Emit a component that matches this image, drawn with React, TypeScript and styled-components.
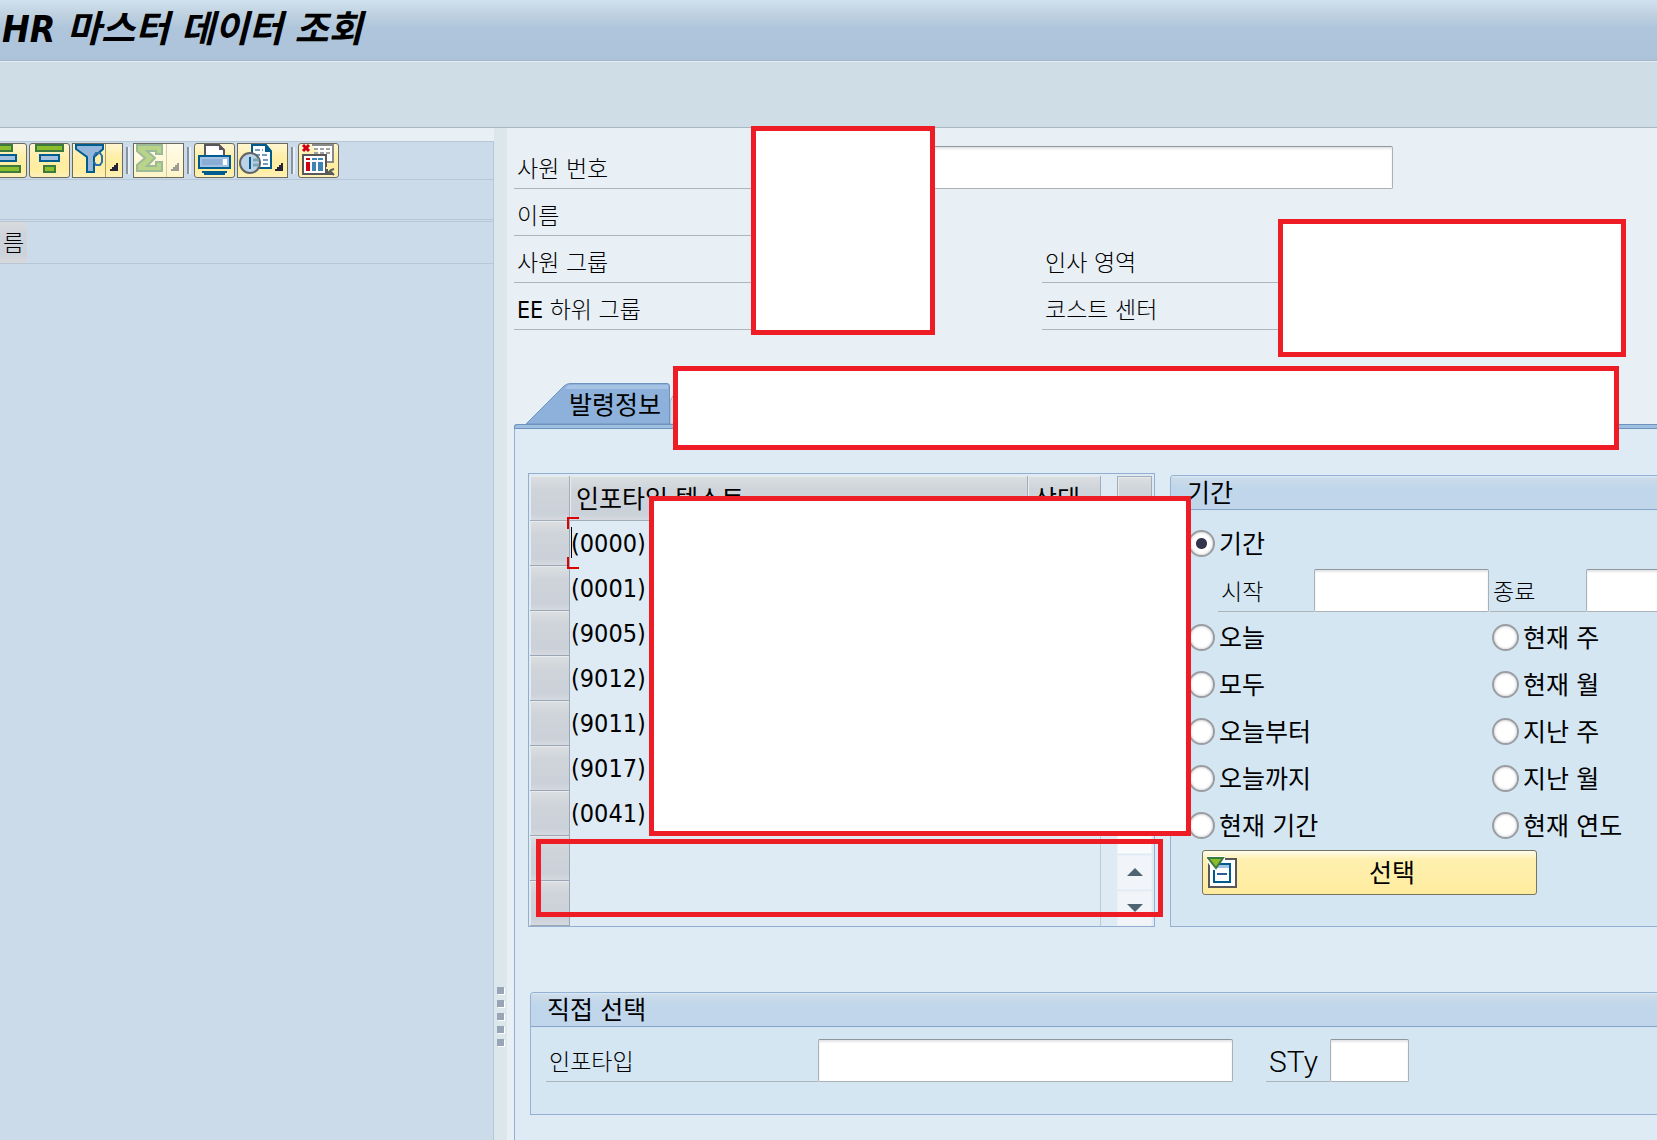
import React from "react";
import styled, { createGlobalStyle, css } from "styled-components";

const GlobalStyle = createGlobalStyle`
  *, *::before, *::after { box-sizing: border-box; }
  body {
    margin: 0;
    overflow: hidden;
    background: #e8eff5;
    color: #000;
    font-family: "DejaVu Sans Condensed", "Noto Sans CJK KR", sans-serif;
    font-size: 25px;
    line-height: 36px;
  }
  button, input { font: inherit; color: inherit; }
`;

/* ---------- frame ---------- */

const Page = styled.div`
  position: relative;
  display: flex;
  flex-direction: column;
  min-height: 100vh;
  overflow: hidden;
`;

const TitleBar = styled.header`
  display: flex;
  align-items: flex-start;
  height: 61px;
  padding: 8px 0 0 2px;
  border-bottom: 1px solid #a3b6c9;
  background: linear-gradient(#d0e0ee 0, #c0d2e0 14px, #aec5db 28px, #adc3da 100%);
`;

const Title = styled.h1`
  margin: 0;
  font-size: 37px;
  line-height: 44px;
  font-weight: 700;
  font-style: italic;
  white-space: nowrap;
`;

const CommandBar = styled.div`
  height: 67px;
  border-top: 1px solid #e6eef5;
  border-bottom: 1px solid #a8b7c4;
  background: #cfdde7;
`;

const Workspace = styled.div`
  display: flex;
  flex: 1;
`;

/* ---------- left tree ---------- */

const SidePanel = styled.aside`
  display: flex;
  flex: 0 0 494px;
  flex-direction: column;
  padding-top: 13px;
  overflow: hidden;
`;

const SideBody = styled.div`
  flex: 1;
  border-top: 1px solid #b8c7d6;
  border-right: 1px solid #b8c5d5;
  background: #cbdbe9;
`;

const Toolbar = styled.div`
  display: flex;
  align-items: center;
  gap: 2px;
  height: 38px;
  margin-left: -14px;
  border-bottom: 1px solid #b8c7d6;
`;

const ToolButton = styled.button<{ $split?: boolean }>`
  display: flex;
  width: ${(p) => (p.$split ? 51 : 41)}px;
  height: 35px;
  padding: 0;
  overflow: hidden;
  border: 1px solid #6b6a5c;
  border-radius: ${(p) => (p.$split ? 0 : 3)}px;
  background: linear-gradient(#fff6d2, #ffeea6 40%, #ffeda0 80%, #fff2bd);

  &:disabled { border-color: #6b6a5c; background: linear-gradient(#fffbe8, #fff4c8); }
`;

const Divider = styled.span`
  width: 4px;
  height: 27px;
  margin: 0 1px;
  border-left: 2px solid #8a93a0;
  border-right: 2px solid #e8eff6;
`;

const FilterStrip = styled.div`
  height: 42px;
  border-bottom: 3px double #b8c7d6;
`;

const TreeHeader = styled.div`
  height: 42px;
  border-bottom: 1px solid #b8c7d6;
`;

const TreeColumn = styled.div`
  width: 27px;
  height: 41px;
  padding-left: 3px;
  background: linear-gradient(#d9dbdd, #cfd4dc 30%, #cdd3db 80%, #d8dadc);
  font-size: 23px;
  font-weight: 300;
  line-height: 42px;
`;

const Splitter = styled.div`
  display: flex;
  flex: 0 0 13px;
  flex-direction: column;
  align-items: center;
  justify-content: flex-end;
  gap: 6px;
  padding-bottom: 94px;
  background: #dce7ec;
`;

const Grip = styled.span`
  width: 7px;
  height: 7px;
  background: #98a5b7;
  box-shadow: 1px 1px 0 #fff;
`;

/* ---------- right side ---------- */

const Main = styled.main`
  display: flex;
  flex: 1;
  flex-direction: column;
  min-width: 0;
  padding: 14px 0 0 7px;
  background: #e8eff5;
`;

const HeaderForm = styled.div`
  display: grid;
  grid-template-columns: 528px 1fr;
  grid-auto-rows: 47px;
  align-items: end;
  margin-bottom: 53px;
`;

const Field = styled.div<{ $col?: number; $row: number; $wide?: boolean }>`
  display: flex;
  grid-row: ${(p) => p.$row};
  grid-column: ${(p) => (p.$wide ? "1 / -1" : p.$col ?? 1)};
`;

const Label = styled.label<{ $width: number; $latin?: boolean }>`
  flex: 0 0 ${(p) => p.$width}px;
  height: 43px;
  padding-left: 3px;
  border-bottom: 1px solid #adb5bb;
  font-size: 23px;
  font-weight: 300;
  line-height: 46px;
  white-space: nowrap;
  ${(p) =>
    p.$latin &&
    css`
      font-family: Roboto, sans-serif;
      font-size: 30px;
    `}
`;

const TextBox = styled.input<{ $width: number }>`
  flex: 0 0 ${(p) => p.$width}px;
  width: ${(p) => p.$width}px;
  height: 43px;
  padding: 0 6px;
  border: 1px solid #a9b0b6;
  border-top-color: #8f969c;
  border-radius: 2px;
  outline: none;
  background: #fff;
  box-shadow: inset 0 2px 2px #e3e5e8;
`;

const TabList = styled.div`
  display: flex;
  height: 41px;
  padding-left: 12px;
`;

const Tab = styled.button`
  position: relative;
  width: 144px;
  padding: 0 0 0 43px;
  border: 0;
  background: none;
  line-height: 46px;
  text-align: left;
  white-space: nowrap;
`;

const TabShape = styled.svg`
  position: absolute;
  inset: 0;
  z-index: -1;
`;

const TabStack = styled.div`
  position: relative;
  z-index: 0;
`;

const TabStrip = styled.div`
  height: 5px;
  border: solid #6c94bf;
  border-width: 1px 0 1px 1px;
  border-radius: 3px 0 0 0;
  background: #9fc0e0;
`;

const TabPanel = styled.section`
  flex: 1;
  padding: 44px 0 0 13px;
  border-left: 1px solid #8fb1d1;
  background: #dfebf4;
`;

const Columns = styled.div`
  display: flex;
  align-items: stretch;
  gap: 15px;
  margin-bottom: 65px;
`;

/* ---------- infotype table ---------- */

const TableBox = styled.div`
  display: flex;
  flex: 0 0 627px;
  justify-content: space-between;
  padding: 2px 2px 0 1px;
  border: 1px solid #92aed0;
`;

const Table = styled.table`
  width: 571px;
  border-collapse: separate;
  border-spacing: 0;
  table-layout: fixed;
`;

const raised = css`
  background: linear-gradient(#dbdfe1, #cfd4da 30%, #cbd1d9 85%, #d5d9e0);
  box-shadow: inset 1px 1px 0 #e8ebee;
`;

const HeadCell = styled.th<{ $width?: number }>`
  width: ${(p) => (p.$width ? `${p.$width}px` : "auto")};
  height: 45px;
  padding: 4px 0 0 6px;
  border-right: 1px solid #a3adb8;
  border-bottom: 1px solid #a3adb8;
  font-weight: 400;
  text-align: left;
  white-space: nowrap;
  ${raised}
`;

const RowHead = styled.td`
  height: 45px;
  padding: 0;
  border-right: 1px solid #9aa6b4;
  border-bottom: 1px solid #9aa6b4;
  ${raised}
`;

const Cell = styled.td<{ $last?: boolean }>`
  position: relative;
  height: 45px;
  padding: 0 0 0 1px;
  border-right: ${(p) => (p.$last ? "1px solid #bccad6" : "0")};
`;

const Focus = styled.span`
  position: absolute;
  top: -4px;
  left: -3px;
  width: 12px;
  height: 52px;
  background:
    linear-gradient(#e00000, #e00000) 0 0 / 12px 2px no-repeat,
    linear-gradient(#e00000, #e00000) 0 0 / 2px 12px no-repeat,
    linear-gradient(#e00000, #e00000) 0 100% / 12px 2px no-repeat,
    linear-gradient(#e00000, #e00000) 0 100% / 2px 12px no-repeat,
    linear-gradient(#000, #000) 4px 10px / 1px 31px no-repeat;
`;

const ScrollColumn = styled.div`
  display: flex;
  flex: 0 0 35px;
  flex-direction: column;
  gap: 1px;
`;

const ScrollHead = styled.div`
  height: 45px;
  border: 1px solid #a3adb8;
  ${raised}
`;

const ScrollThumb = styled.div`
  flex: 1;
  border: 1px solid #edf2f8;
  background: #f9fbfd;
`;

const ScrollButton = styled.button`
  display: flex;
  align-items: flex-start;
  justify-content: center;
  height: 35px;
  padding: 11px 0 0;
  border: 1px solid #ecf1f7;
  background: #f1f5f9;
`;

/* ---------- groups ---------- */

const Group = styled.fieldset<{ $top?: number; $left?: number }>`
  flex: 1;
  min-width: 0;
  margin: ${(p) => p.$top ?? 0}px 0 0 ${(p) => p.$left ?? 0}px;
  padding: 0;
  border: 1px solid #92b1d4;
  border-right: 0;
  border-radius: 4px 0 0 0;
  background: #d5e6f3;
`;

const GroupTitle = styled.div`
  height: 34px;
  padding-left: 16px;
  border-bottom: 1px solid #86a5cb;
  border-radius: 3px 0 0 0;
  background: linear-gradient(#dce9f4 0, #ccdcea 2px, #c0d6ea 12px, #c1d6ea 100%);
  line-height: 36px;
`;

const PeriodGrid = styled.div`
  display: grid;
  grid-template-columns: 304px 1fr;
  grid-auto-rows: 47px;
  align-items: center;
  padding: 10px 0 0 17px;
`;

const RadioLabel = styled.label<{ $col: number }>`
  display: flex;
  grid-column: ${(p) => p.$col};
  align-items: center;
  gap: 4px;
  line-height: 47px;
  white-space: nowrap;
`;

const RadioText = styled.span`
  padding-top: 3px;
  line-height: 36px;
`;

const Radio = styled.input`
  flex: 0 0 27px;
  width: 27px;
  height: 27px;
  margin: 0;
  appearance: none;
  border: 2px solid #9a9da1;
  border-radius: 50%;
  background: #fff;
  box-shadow: inset 0 0 3px #b5b8bb;

  &:checked { background: radial-gradient(circle, #34344e 0 5px, #fff 6px); }
`;

const DateRow = styled.div`
  display: flex;
  grid-column: 1 / -1;
  gap: 1px;
  padding-left: 30px;
`;

const Pair = styled.div`
  display: flex;
  flex: none;
`;

const SelectButton = styled.button`
  display: flex;
  align-items: center;
  width: 335px;
  height: 45px;
  margin: 1px 0 0 31px;
  padding: 0 4px;
  border: 1px solid #77745f;
  border-radius: 3px;
  background: linear-gradient(#fffdf0, #fff0b0 8px, #ffeda3 80%, #ffeb9c);
`;

const ButtonText = styled.span`
  flex: 1;
  padding: 3px 0 0 14px;
  text-align: center;
`;

const DirectRow = styled.div`
  display: flex;
  gap: 33px;
  height: 87px;
  padding: 12px 0 0 15px;
`;

/* Red marker frames that lie over the form */
const Mask = styled.div<{ $x: number; $y: number; $w: number; $h: number; $clear?: boolean }>`
  position: absolute;
  left: ${(p) => p.$x}px;
  top: ${(p) => p.$y}px;
  width: ${(p) => p.$w}px;
  height: ${(p) => p.$h}px;
  border: 5px solid #ee1c25;
  background: ${(p) => (p.$clear ? "transparent" : "#fff")};
  pointer-events: none;
`;

/* ---------- icons ---------- */

const GREEN = "#8cbd2c";
const DGREEN = "#3d7a40";
const BLUE = "#005b8e";
const LBLUE = "#94b6da";

const Bars = ({ boxes }: { boxes: number[][] }) => (
  <svg width="39" height="33" viewBox="1 1 39 33">
    {boxes.map(([x, y, w], i) => (
      <rect key={i} x={x + 1} y={y + 1} width={w - 2} height="6"
        fill={i === 1 ? "#a3c1df" : GREEN} stroke={i === 1 ? BLUE : DGREEN} strokeWidth="2" />
    ))}
  </svg>
);

const Corner = ({ color = "#23233a" }: { color?: string }) => (
  <path d="M46 20v8h-8v-2h2v-2h2v-2h2v-2z" fill={color} />
);

const FilterIcon = () => (
  <svg width="49" height="33" viewBox="1 1 49 33">
    <path d="M4 2h27v4l-9 8v15h-7V14L4 6z" fill={LBLUE} stroke={BLUE} strokeWidth="2" />
    <path d="M22 13l2-3h4l2 3v6l-2 3h-4l-2-3" fill="none" stroke="#2a72ab" strokeWidth="2" />
    <path d="M33.500 1v33" stroke="#a79d6c" />
    <Corner />
  </svg>
);

const SumIcon = () => (
  <svg width="49" height="33" viewBox="1 1 49 33">
    <path d="M4 2h25v9h-6V8H14l8 7-8 8h9v-4h6v9H4v-6l8-7-8-7z" fill="#b9d489" stroke="#9cba98" strokeWidth="2" />
    <path d="M33.500 1v33" stroke="#d5cda8" />
    <Corner color="#9d9b98" />
  </svg>
);

const PrintIcon = () => (
  <svg width="39" height="33" viewBox="1 1 39 33">
    <path d="M11 12V2h14l5 5v5" fill="#fff" stroke="#58585a" strokeWidth="2" />
    <path d="M25 1v6h6z" fill="#58585a" />
    <rect x="5" y="13" width="31" height="12" fill="#a3c1e3" stroke={BLUE} strokeWidth="2" />
    <rect x="8" y="16" width="20" height="6" fill="#8aaed5" />
    <rect x="29" y="16" width="4" height="6" fill="#fff" />
    <path d="M8 28h25v2h-2v2H10v-2H8z" fill={BLUE} />
  </svg>
);

const PreviewIcon = () => (
  <svg width="49" height="33" viewBox="1 1 49 33">
    <path d="M15 2h14l5 6v17H15z" fill="#fff" stroke={BLUE} strokeWidth="2" />
    <path d="M28 1v8h7z" fill={BLUE} />
    <path d="M18 7h8M18 12h13M26 17h6M26 21h6" stroke="#6f9dbd" strokeWidth="2" strokeDasharray="5 2" />
    <circle cx="13" cy="20" r="10" fill="#bcd2e6" stroke="#606468" strokeWidth="2" />
    <path d="M13 14v12" stroke={BLUE} strokeWidth="2" />
    <path d="M16 17h6M16 22h6" stroke="#79a6b8" strokeWidth="3" />
    <Corner />
  </svg>
);

const LayoutIcon = () => (
  <svg width="39" height="33" viewBox="1 1 39 33">
    <path d="M14 2h21v17h-6" fill="#fff" stroke="#8a8a8a" strokeWidth="2" />
    <path d="M16 6h17M16 10h17" stroke="#a2a2a2" strokeWidth="2" strokeDasharray="4 2" />
    <path d="M5 2l6 6M11 2L5 8" stroke="#cf0011" strokeWidth="3" />
    <rect x="5" y="12" width="23" height="19" fill="#fff" stroke="#58585a" strokeWidth="2" />
    <path d="M8 16h4" stroke="#cf0011" strokeWidth="2" />
    <path d="M14 16h5M20 16h5" stroke="#3f83b2" strokeWidth="2" />
    <rect x="8" y="19" width="4" height="9" fill="#cf0011" />
    <path d="M14 19h4v9h-4zM20 19h5v9h-5z" fill="#3f83b2" />
    <path d="M28 24h8v8h-8z" fill="#ffeea6" />
    <path d="M29 26v5h6M30 30l3-3 3-1M32 28l4 4" fill="none" stroke="#58585a" strokeWidth="2" />
  </svg>
);

const PickIcon = () => (
  <svg width="31" height="33" viewBox="0 0 31 33" aria-hidden="true">
    <rect x="2" y="3" width="27" height="28" fill="#fff" stroke="#58585a" strokeWidth="2" />
    <path d="M0 0h18v4l-7 9H5L0 5z" fill="#fff" />
    <path d="M7 14v12h16V8H12" fill="none" stroke={BLUE} strokeWidth="2" />
    <path d="M12 9h10v3H10z" fill="#a5c3e2" />
    <path d="M10 18h10" stroke="#2c5c9c" strokeWidth="2" />
    <path d="M1 2h15l-7 10z" fill={GREEN} stroke={DGREEN} strokeWidth="2" />
  </svg>
);

const Arrow = ({ down }: { down?: boolean }) => (
  <svg width="18" height="10" viewBox="0 0 18 10">
    <path d={down ? "M1 1h16L9 9z" : "M1 9h16L9 1z"} fill="#4f6473" />
  </svg>
);

/* ---------- data ---------- */

const rows = ["(0000)", "(0001)", "(9005)", "(9012)", "(9011)", "(9017)", "(0041)", "", ""];

const periods = [
  ["오늘", "현재 주"],
  ["모두", "현재 월"],
  ["오늘부터", "지난 주"],
  ["오늘까지", "지난 월"],
  ["현재 기간", "현재 연도"],
];

export default function App() {
  return (
    <>
      <GlobalStyle />
      <Page>
        <TitleBar>
          <Title>HR 마스터 데이터 조회</Title>
        </TitleBar>
        <CommandBar />
        <Workspace>
          <SidePanel>
            <SideBody>
              <Toolbar>
                <ToolButton aria-label="오름차순"><Bars boxes={[[6, 1, 21], [6, 11, 25], [6, 22, 29]]} /></ToolButton>
                <ToolButton aria-label="내림차순"><Bars boxes={[[6, 1, 29], [10, 11, 21], [14, 22, 13]]} /></ToolButton>
                <ToolButton $split aria-label="필터"><FilterIcon /></ToolButton>
                <Divider />
                <ToolButton $split disabled aria-label="합계"><SumIcon /></ToolButton>
                <Divider />
                <ToolButton aria-label="인쇄"><PrintIcon /></ToolButton>
                <ToolButton $split aria-label="미리보기"><PreviewIcon /></ToolButton>
                <Divider />
                <ToolButton aria-label="레이아웃"><LayoutIcon /></ToolButton>
              </Toolbar>
              <FilterStrip />
              <TreeHeader>
                <TreeColumn>름</TreeColumn>
              </TreeHeader>
            </SideBody>
          </SidePanel>
          <Splitter>
            {[0, 1, 2, 3, 4].map((n) => <Grip key={n} />)}
          </Splitter>
          <Main>
            <HeaderForm>
              <Field $row={1} $wide>
                <Label $width={240} htmlFor="pernr">사원 번호</Label>
                <TextBox $width={639} id="pernr" />
              </Field>
              <Field $row={2}><Label as="span" $width={240}>이름</Label></Field>
              <Field $row={3}><Label as="span" $width={240}>사원 그룹</Label></Field>
              <Field $row={4}><Label as="span" $width={240}>EE 하위 그룹</Label></Field>
              <Field $row={3} $col={2}><Label as="span" $width={240}>인사 영역</Label></Field>
              <Field $row={4} $col={2}><Label as="span" $width={240}>코스트 센터</Label></Field>
            </HeaderForm>
            <TabStack>
              <TabList role="tablist">
                <Tab role="tab" aria-selected="true">
                  <TabShape width="160" height="41" viewBox="0 0 160 41">
                    <path d="M144 18L150 8V41H144z" fill="#d3e0ec" stroke="#9db4cc" />
                    <path d="M0 41L38 3Q41 0.500 44 0.500H141Q143.500 0.500 143.500 3V41z" fill="#8db1db" stroke="#6c94bf" />
                    <path d="M42 2H142V6H39z" fill="#a6c3e3" />
                  </TabShape>
                  발령정보
                </Tab>
              </TabList>
              <TabStrip />
            </TabStack>
            <TabPanel>
              <Columns>
                <TableBox>
                  <Table>
                    <thead>
                      <tr>
                        <HeadCell $width={40} aria-label="행 선택" />
                        <HeadCell>인포타입 텍스트</HeadCell>
                        <HeadCell $width={73}>상태</HeadCell>
                      </tr>
                    </thead>
                    <tbody>
                      {rows.map((code, i) => (
                        <tr key={i}>
                          <RowHead />
                          <Cell>
                            {i === 0 && <Focus />}
                            {code}
                          </Cell>
                          <Cell $last />
                        </tr>
                      ))}
                    </tbody>
                  </Table>
                  <ScrollColumn>
                    <ScrollHead />
                    <ScrollThumb />
                    <ScrollButton aria-label="위로"><Arrow /></ScrollButton>
                    <ScrollButton aria-label="아래로"><Arrow down /></ScrollButton>
                  </ScrollColumn>
                </TableBox>
                <Group $top={2} aria-label="기간">
                  <GroupTitle>기간</GroupTitle>
                  <PeriodGrid>
                    <RadioLabel $col={1}>
                      <Radio type="radio" name="period" defaultChecked />
                      <RadioText>기간</RadioText>
                    </RadioLabel>
                    <DateRow>
                      <Pair>
                        <Label $width={96} htmlFor="begda">시작</Label>
                        <TextBox $width={175} id="begda" />
                      </Pair>
                      <Pair>
                        <Label $width={96} htmlFor="endda">종료</Label>
                        <TextBox $width={175} id="endda" />
                      </Pair>
                    </DateRow>
                    {periods.flatMap((pair) =>
                      pair.map((name, c) => (
                        <RadioLabel key={name} $col={c + 1}>
                          <Radio type="radio" name="period" />
                          <RadioText>{name}</RadioText>
                        </RadioLabel>
                      ))
                    )}
                  </PeriodGrid>
                  <SelectButton>
                    <PickIcon />
                    <ButtonText>선택</ButtonText>
                  </SelectButton>
                </Group>
              </Columns>
              <Group $left={2} aria-label="직접 선택">
                <GroupTitle>직접 선택</GroupTitle>
                <DirectRow>
                  <Pair>
                    <Label $width={272} htmlFor="infty">인포타입</Label>
                    <TextBox $width={415} id="infty" />
                  </Pair>
                  <Pair>
                    <Label $width={64} $latin htmlFor="subty">STy</Label>
                    <TextBox $width={79} id="subty" />
                  </Pair>
                </DirectRow>
              </Group>
            </TabPanel>
          </Main>
        </Workspace>
        <Mask $x={751} $y={126} $w={184} $h={209} />
        <Mask $x={1278} $y={219} $w={348} $h={138} />
        <Mask $x={673} $y={366} $w={946} $h={84} />
        <Mask $x={649} $y={496} $w={542} $h={340} />
        <Mask $x={536} $y={839} $w={627} $h={78} $clear />
      </Page>
    </>
  );
}
